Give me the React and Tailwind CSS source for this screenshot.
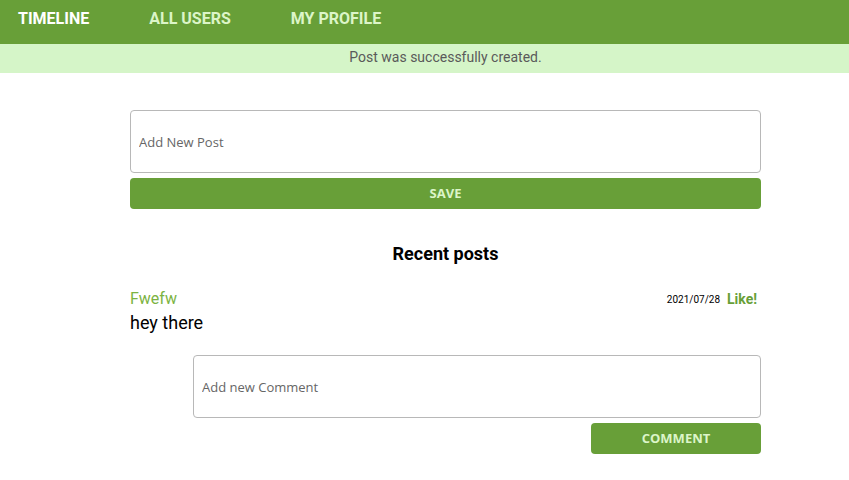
import React from 'react';

const App = () => {
  return (
    <div className="min-h-[480px] bg-white font-['Roboto',sans-serif]">
      <nav className="flex h-[44px] items-center bg-[#689f38] px-[18px] pb-[6px]">
        <a className="mr-[60px] text-[16px] font-bold text-white">TIMELINE</a>
        <a className="mr-[60px] text-[16px] font-bold text-[#dcf5c8]">ALL USERS</a>
        <a className="text-[16px] font-bold text-[#dcf5c8]">MY PROFILE</a>
      </nav>
      <div className="h-[29px] bg-[#d5f5c8] pb-[2px]">
        <div className="ml-[130px] flex h-full w-[631px] items-center justify-center text-[14px] text-[#5a5a5a]">
          Post was successfully created.
        </div>
      </div>

      <main className="ml-[130px] w-[631px] pt-[37px]">
        <form onSubmit={(e) => e.preventDefault()} className="flex flex-col gap-[5px]">
          <input
            placeholder="Add New Post"
            className="h-[63px] rounded-[4px] border border-[#b8b8b8] px-[8px] font-['Open_Sans',sans-serif] text-[13px] text-[#333] placeholder-[#666] outline-none"
          />
          <button className="h-[31px] rounded-[4px] bg-[#689f38] font-['Open_Sans',sans-serif] text-[13px] font-bold text-[#dcf5c8]">
            SAVE
          </button>
        </form>

        <h2 className="mt-[31px] text-center text-[18px] font-bold text-black">Recent posts</h2>

        <div className="mt-[20px]">
          <div className="flex items-center justify-between">
            <span className="text-[16px] text-[#7cb342]">Fwefw</span>
            <div className="flex items-center gap-[7px] pr-[4px]">
              <span className="text-[10px] text-black">2021/07/28</span>
              <span className="text-[14px] font-bold text-[#689f38]">Like!</span>
            </div>
          </div>
          <p className="mt-[-2px] text-[18px] text-black">hey there</p>

          <div className="ml-[63px] mt-[19px] flex flex-col items-end gap-[5px]">
            <input
              placeholder="Add new Comment"
              className="h-[63px] w-full rounded-[4px] border border-[#b8b8b8] px-[8px] font-['Open_Sans',sans-serif] text-[13px] text-[#333] placeholder-[#666] outline-none"
            />
            <button className="h-[31px] w-[170px] rounded-[4px] bg-[#689f38] font-['Open_Sans',sans-serif] text-[13px] font-bold text-[#dcf5c8]">
              COMMENT
            </button>
          </div>
        </div>
      </main>
    </div>
  );
};

export default App;
